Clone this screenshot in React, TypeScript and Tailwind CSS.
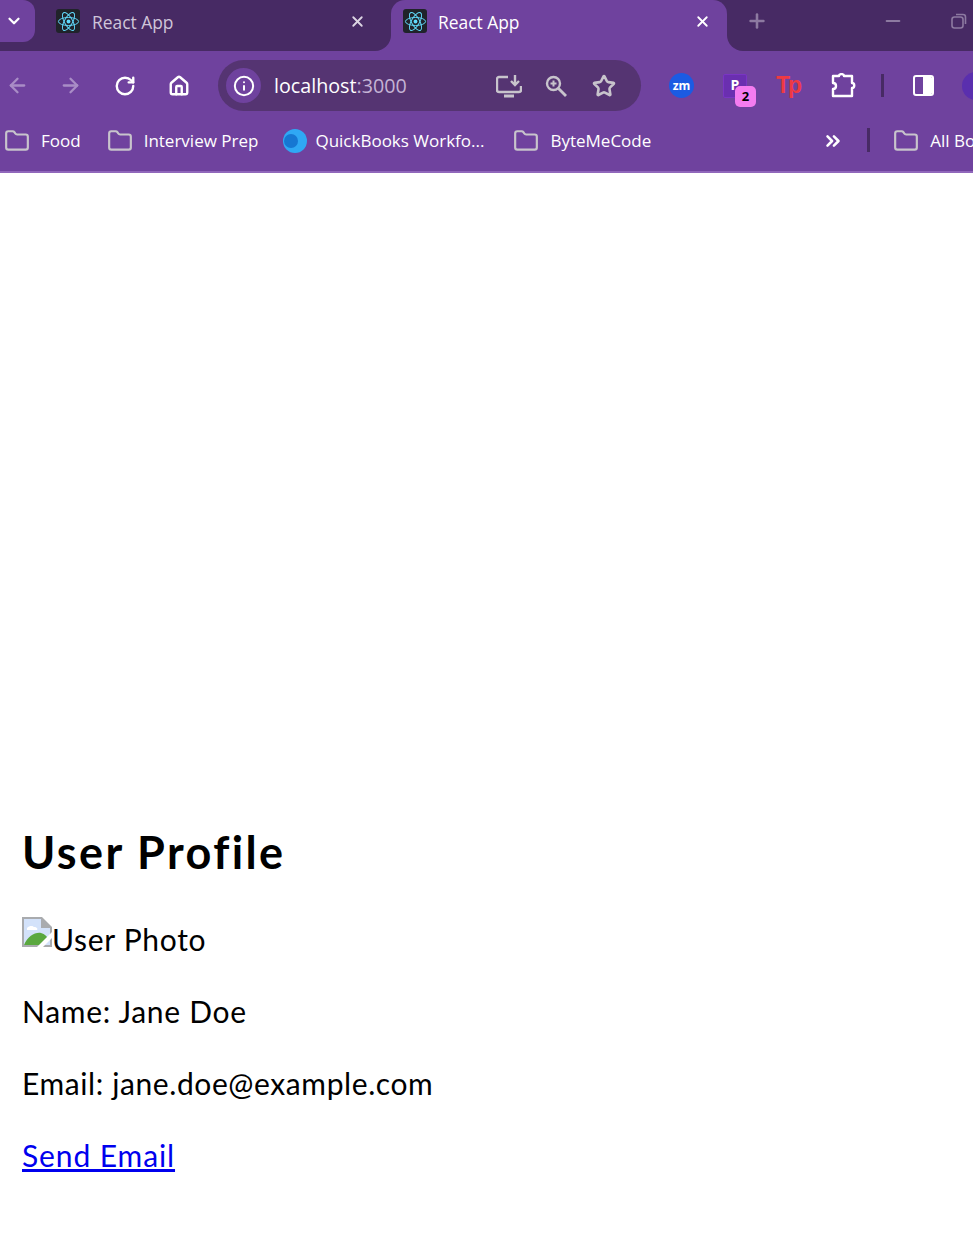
import { ArrowLeft, ArrowRight, ChevronDown, ChevronsRight, Folder, Home, Info, Minus, Plus, RotateCw, Star, X } from 'lucide-react';

function ReactIcon() {
  return (
    <div className="flex h-6 w-6 shrink-0 items-center justify-center rounded-[3px] bg-[#20232a]">
      <svg viewBox="0 0 24 24" className="h-[23px] w-[23px]" fill="none" stroke="#61dafb" strokeWidth="1">
        <circle cx="12" cy="12" r="2" fill="#61dafb" stroke="none" />
        <ellipse cx="12" cy="12" rx="10.5" ry="4.2" />
        <ellipse cx="12" cy="12" rx="10.5" ry="4.2" transform="rotate(60 12 12)" />
        <ellipse cx="12" cy="12" rx="10.5" ry="4.2" transform="rotate(120 12 12)" />
      </svg>
    </div>
  );
}

function Bookmark({ label, className }: { label: string; className: string }) {
  return (
    <div className={`flex shrink-0 items-center ${className}`}>
      <Folder className="h-[26px] w-[26px] shrink-0 text-[#c8c4cc]" strokeWidth={2} />
      <span className="ml-[11px] whitespace-nowrap text-white">{label}</span>
    </div>
  );
}

function BrokenImage() {
  return (
    <svg viewBox="0 0 30 30" className="-mt-px inline-block h-[30px] w-[30px] shrink-0">
      <path d="M0 0H20L30 10V30H0Z" fill="#a9abae" />
      <path d="M2 2H19V11H28V28H2Z" fill="#d3e2fa" />
      <path d="M2 28C6 19 13 15 19 16C23 17 25 20 26 21L19 28Z" fill="#5aa83f" />
      <path d="M5 11C8 8 11 9 12 10C15 10 16 12 15 13H5Z" fill="#fff" />
      <path d="M15 30L30 15V21L21 30Z" fill="#fff" />
    </svg>
  );
}

export default function App() {
  return (
    <div className="h-[1240px] w-[973px] overflow-hidden bg-white font-['Open_Sans',sans-serif]">
      <header className="h-[173px] overflow-hidden border-b-2 border-[#9067bb] bg-[#6f429e]">
        {/* tab strip */}
        <div className="flex h-[51px]">
          <div className="flex h-full w-[391px] shrink-0 rounded-br-[16px] bg-[#472a64]">
            <div className="flex h-[42px] w-[35px] items-center justify-center rounded-br-[12px] rounded-tr-[12px] bg-[#6f429e] pr-[7px]">
              <ChevronDown className="h-[18px] w-[18px] shrink-0 text-white" strokeWidth={3} />
            </div>
            <div className="flex h-[42px] items-center pl-[21px]">
              <ReactIcon />
              <span className="mt-[3px] ml-[12px] w-[257px] text-[17.4px] text-[#cfc5d9]">React App</span>
              <X className="h-[17px] w-[17px] text-[#dcd5e3]" strokeWidth={2.6} />
            </div>
          </div>
          <div className="w-[336px] shrink-0 bg-[#472a64]">
            <div className="flex h-[51px] items-start rounded-t-[14px] bg-[#6f429e] pl-[12px]">
              <div className="flex h-[42px] items-center">
                <ReactIcon />
                <span className="mt-[3px] ml-[11px] w-[256px] text-[17.4px] text-white">React App</span>
                <X className="h-[17px] w-[17px] text-white" strokeWidth={2.6} />
              </div>
            </div>
          </div>
          <div className="flex min-w-0 flex-1 items-start rounded-bl-[16px] bg-[#472a64]">
            <div className="flex h-[42px] items-center pl-[19px]">
              <Plus className="h-[22px] w-[22px] text-[#8d7aa1]" strokeWidth={2.8} />
              <Minus className="ml-[114px] h-[22px] w-[22px] text-[#8d7aa1]" strokeWidth={2} />
              <svg viewBox="0 0 16 16" className="ml-[47px] h-[16px] w-[16px]" fill="none" stroke="#8d7aa1" strokeWidth="1.6">
                <rect x="1" y="4" width="11" height="11" rx="2.5" />
                <path d="M5 1.5H12C13.5 1.5 14.5 2.5 14.5 4V11" />
              </svg>
            </div>
          </div>
        </div>

        {/* toolbar */}
        <div className="flex h-[68px] items-center pt-[1px]">
          <ArrowLeft className="ml-[6px] h-[23px] w-[23px] shrink-0 text-[#a98dc6]" strokeWidth={2.4} />
          <ArrowRight className="ml-[30px] h-[23px] w-[23px] shrink-0 text-[#a98dc6]" strokeWidth={2.4} />
          <RotateCw className="ml-[32px] h-[22px] w-[22px] shrink-0 text-white" strokeWidth={2.6} />
          <Home className="ml-[32px] h-[22px] w-[22px] shrink-0 text-white" strokeWidth={2.6} />
          <div className="ml-[28px] flex h-[51px] w-[423px] shrink-0 items-center rounded-full bg-[#553472] pl-[8px]">
            <div className="flex h-[35px] w-[35px] items-center justify-center rounded-full bg-[#6f429e]">
              <Info className="h-[22px] w-[22px] text-white" strokeWidth={2.2} />
            </div>
            <span className="ml-[13px] w-[222px] text-[19.7px] text-white">
              localhost<span className="text-[#c4b3d5]">:3000</span>
            </span>
            <svg viewBox="0 0 26 24" className="h-[24px] w-[26px]" fill="none" stroke="#c8c4cc" strokeWidth="2.4">
              <path d="M12 3H3C2 3 1 4 1 5V16C1 17 2 18 3 18H23C24 18 25 17 25 16V12" />
              <path d="M8 22H18" strokeWidth="3" />
              <path d="M19 1V10M15 7L19 11L23 7" />
            </svg>
            <svg viewBox="0 0 24 24" className="ml-[22px] h-[24px] w-[24px]" fill="none" stroke="#c8c4cc" strokeWidth="2.4">
              <circle cx="9.5" cy="9.5" r="6.5" />
              <path d="M14.5 14.5L22 22" strokeWidth="2.8" />
              <path d="M6.5 9.5H12.5M9.5 6.5V12.5" strokeWidth="2" />
            </svg>
            <Star className="ml-[24px] h-[24px] w-[24px] text-[#c8c4cc]" strokeWidth={2.6} />
          </div>
          <div className="ml-[28px] flex h-[25px] w-[25px] shrink-0 items-center justify-center rounded-full bg-[#1b5be3] text-[12px] font-bold text-white">
            zm
          </div>
          <div className="relative ml-[29px] h-[24px] w-[24px] shrink-0 rounded-[2px] border border-[#7a35c4] bg-[#6a2fb0] text-center text-[14px] leading-[20px] font-bold text-white">
            P
            <span className="absolute top-[11px] left-[11px] flex h-[21px] w-[21px] items-center justify-center rounded-[5px] bg-[#f47cf0] text-[13px] font-bold text-black">
              2
            </span>
          </div>
          <span className="ml-[29px] w-[24px] shrink-0 font-['Liberation_Sans',sans-serif] text-[23px] leading-none font-bold tracking-[-2px] text-[#ee3a43]">Tp</span>
          <svg viewBox="0 0 26 26" className="ml-[30px] h-[26px] w-[26px] shrink-0" fill="none" stroke="#fff" strokeWidth="2.4" strokeLinejoin="round">
            <path d="M3 3H9C9 0.5 14 0.5 14 3H22V10C25 10 25 15 22 15V23H3V16C7 16 7 10 3 10Z" />
          </svg>
          <div className="ml-[25px] h-[23px] w-[3px] shrink-0 bg-[#472a64]" />
          <div className="ml-[29px] flex h-[21px] w-[21px] shrink-0 overflow-hidden rounded-[3px] border-2 border-white">
            <div className="flex-1" />
            <div className="w-[9px] bg-white" />
          </div>
          <div className="ml-[28px] h-[28px] w-[28px] shrink-0 rounded-full bg-[#5a2fae]" />
        </div>

        {/* bookmarks bar */}
        <div className="flex h-[52px] items-start pt-[9px] text-[17px]">
          <Bookmark label="Food" className="ml-[4px]" />
          <Bookmark label="Interview Prep" className="ml-[26px]" />
          <div className="ml-[25px] flex shrink-0 items-center">
            <div className="relative h-[24px] w-[24px] rounded-full bg-[#2fa8f4]">
              <div className="absolute top-[5px] left-[1px] h-[14px] w-[14px] rounded-full bg-[#1677d2]" />
            </div>
            <span className="ml-[8px] whitespace-nowrap text-white">QuickBooks Workfo...</span>
          </div>
          <Bookmark label="ByteMeCode" className="ml-[29px]" />
          <ChevronsRight className="mt-[2px] ml-[171px] h-[22px] w-[22px] shrink-0 text-white" strokeWidth={2.8} />
          <div className="ml-[23px] h-[24px] w-[3px] shrink-0 bg-[#472a64]" />
          <Bookmark label="All Bookmarks" className="ml-[23px]" />
        </div>
      </header>

      <main className="px-[22px] pt-[648px] font-['Lato',cursive] text-[30px] leading-[42px] tracking-[0.7px] text-black">
        <h1 className="mb-[35px] text-[45px] leading-[62px] font-bold tracking-[2.4px]">User Profile</h1>
        <p className="mb-[30px] flex items-start">
          <BrokenImage />
          <span>User Photo</span>
        </p>
        <p className="mb-[30px]">Name: Jane Doe</p>
        <p className="mb-[30px] tracking-[0.6px]">Email: jane.doe@example.com</p>
        <a href="#" className="tracking-[0.9px] text-[#0000ee] underline">
          Send Email
        </a>
      </main>
    </div>
  );
}
